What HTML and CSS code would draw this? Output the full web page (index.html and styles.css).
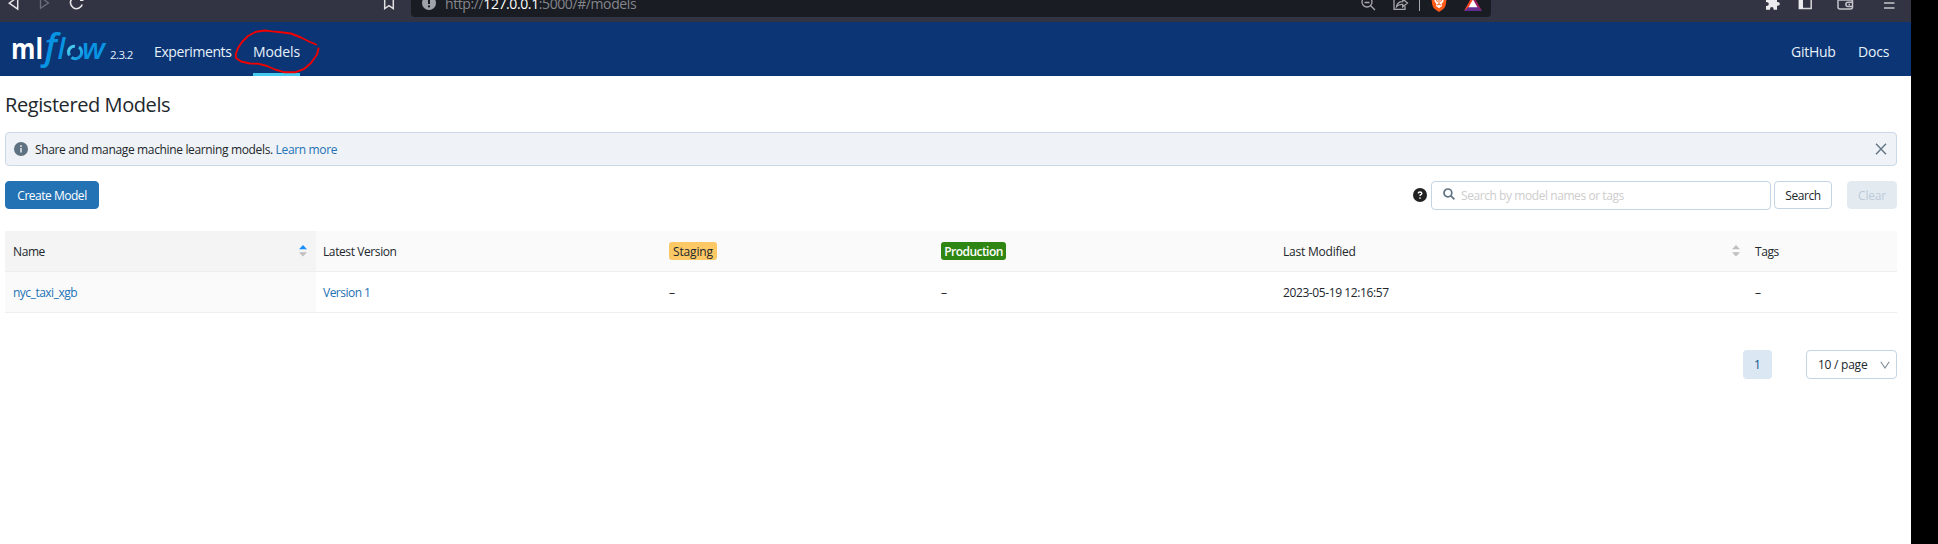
FILE: index.html
```html
<!DOCTYPE html>
<html lang="en">
<head>
<meta charset="utf-8">
<title>Registered Models</title>
<link rel="stylesheet" href="styles.css">
</head>
<body>
<div class="window">
  <div class="chrome">
    <svg class="back" width="12" height="22" viewBox="0 0 12 22" fill="none" stroke="#e6e6e8" stroke-width="1.5"><path d="M9.7 -3V9L1.2 3.2L9.7 -3"/></svg>
    <svg class="forward" width="12" height="22" viewBox="0 0 12 22" fill="none" stroke="#6c6e7b" stroke-width="1.3"><path d="M1.5 -3V8.3L9.5 3L1.5 -3"/></svg>
    <svg class="reload" width="15" height="22" viewBox="0 0 15 22" fill="none" stroke="#e6e6e8" stroke-width="1.6"><path d="M3.2 -1.5A6 6 0 1 0 13.2 4.5"/><path d="M11 -1H14.5V1H11Z" fill="#e6e6e8" stroke="none"/></svg>
    <svg class="bookmark" width="12" height="22" viewBox="0 0 12 22" fill="none" stroke="#dedee0" stroke-width="1.5"><path d="M1.7 -4V8.6L6 5.7L10.3 8.6V-4"/></svg>
    <div class="address">
      <svg class="warn" width="14" height="17" viewBox="0 0 14 17"><circle cx="7" cy="3" r="7" fill="#a0a2aa"/><path d="M7 -1V4" stroke="#191c22" stroke-width="2"/><circle cx="7" cy="6.4" r="1.1" fill="#191c22"/></svg>
      <span class="url">http://<b>127.0.0.1</b>:5000/#/models</span>
      <svg class="magnify" width="15" height="17" viewBox="0 0 15 17" fill="none" stroke="#a7a8ad" stroke-width="1.3"><circle cx="6" cy="2" r="5"/><path d="M3.5 2.5H8.5M9.7 5.7L14 10"/></svg>
      <svg class="share" width="16" height="17" viewBox="0 0 16 17" fill="none" stroke="#a7a8ad" stroke-width="1.3"><path d="M1 0V9.4H12V6.3M3.5 6.7C4 3 6.4 1.6 9.7 1.6V-1L14.5 3.1L9.7 7V4.4C7 4.2 5 4.8 3.5 6.7Z"/></svg>
      <span class="divider"></span>
      <svg class="brave" width="16" height="17" viewBox="0 0 16 17"><path d="M0 -4H16L14.7 5Q14 8.2 11 10L8 12L5 10Q2 8.2 1.3 5Z" fill="#fb5a18"/><path d="M3 -3H13L12.4 1.5L10.5 4L11 6L8 8.2L5 6L5.5 4L3.6 1.5Z" fill="#fff"/><path d="M5 .6L7 1.3M11 .6L9 1.3M8 0V4M6 5.2L8 4L10 5.2" fill="none" stroke="#fb5a18" stroke-width="1"/></svg>
      <svg class="bat" width="18" height="17" viewBox="0 0 18 17"><path d="M9 -5L0 11L9 7Z" fill="#ff4724"/><path d="M9 -5L18 11L9 7Z" fill="#9e1f63"/><path d="M0 11L4.5 7H13.5L18 11Z" fill="#662d91"/><path d="M9 -.5L4.6 7.2H13.4Z" fill="#fff"/></svg>
    </div>
    <svg class="puzzle" width="15" height="22" viewBox="0 0 15 22"><path d="M1 -2H12V2Q14.8 1.8 14.8 4Q14.8 6 12 5.8V9.7H8.6Q8.8 6.9 6.8 6.9Q4.8 6.9 5 9.7H1V6Q3.8 6.2 3.8 4Q3.8 2 1 2Z" fill="#ececee"/></svg>
    <svg class="panel" width="15" height="22" viewBox="0 0 15 22"><path d="M1.3 -3V8.6H13.2V-3" fill="none" stroke="#d6d7da" stroke-width="1.5"/><path d="M1 -3H5V9H1Z" fill="#ececee"/></svg>
    <svg class="wallet" width="17" height="22" viewBox="0 0 17 22" fill="none" stroke="#c4c5ca" stroke-width="1.5"><path d="M1 -2V7Q1 9 3 9H13.5Q15.5 9 15.5 7V1Q15.5 -.1 14 -.1H1M15.5 2.3H11Q8.9 2.3 8.9 4.4Q8.9 6.4 11 6.4H15.5M11.5 4.4H13"/></svg>
    <svg class="burger" width="11" height="22" viewBox="0 0 11 22" stroke="#c4c5ca" stroke-width="1.6"><path d="M0 3H10.5M0 8H10.5"/></svg>
  </div>

  <header class="header">
    <svg class="logo" width="96" height="54" viewBox="0 0 96 54">
      <defs><linearGradient id="ring" x1="0" y1="0" x2="1" y2="1"><stop offset="0" stop-color="#52d0ec"/><stop offset="1" stop-color="#0894e2"/></linearGradient></defs>
      <text class="logo-ml" x="-1" y="37" textLength="32" lengthAdjust="spacingAndGlyphs">ml</text>
      <text class="logo-fl" x="32.5" y="37"><tspan class="logo-f">f</tspan><tspan x="45.5">l</tspan></text>
      <path d="M57.5 33.5A6 6 0 0 1 63 24.2M67 25A6 6 0 0 1 59.5 35.5" fill="none" stroke="url(#ring)" stroke-width="3"/>
      <text class="logo-fl" x="70" y="37" textLength="23" lengthAdjust="spacingAndGlyphs">w</text>
    </svg>
    <span class="version">2.3.2</span>
    <nav class="nav">
      <a class="experiments">Experiments</a>
      <a class="models active">Models</a>
    </nav>
    <nav class="links"><a class="github">GitHub</a><a class="docs">Docs</a></nav>
  </header>

  <main class="main">
    <h1 class="title">Registered Models</h1>
    <div class="alert">
      <svg class="info" width="14" height="14" viewBox="0 0 14 14"><circle cx="7" cy="7" r="7" fill="#5f7281"/><path d="M7 3.2V4.9M7 6V10.4" stroke="#e8edf1" stroke-width="1.5"/></svg>
      <span class="alert-text">Share and manage machine learning models. <a class="link">Learn more</a></span>
      <svg class="close" width="12" height="12" viewBox="0 0 12 12" stroke="#5f7281" stroke-width="1.3"><path d="M1 .7L11 11.3M11 .7L1 11.3"/></svg>
    </div>
    <div class="toolbar">
      <button class="btn create">Create Model</button>
      <svg class="help" width="14" height="14" viewBox="0 0 14 14"><circle cx="7" cy="7" r="7" fill="#222"/><path d="M5.2 5.4Q5.3 4 7 4Q8.8 4 8.8 5.4Q8.8 6.2 7.8 6.7Q7 7.1 7 8" fill="none" stroke="#fff" stroke-width="1.4"/><circle cx="7" cy="10" r=".85" fill="#fff"/></svg>
      <div class="search-box">
        <svg width="12" height="12" viewBox="0 0 12 12" fill="none" stroke="#5f7281" stroke-width="1.7"><circle cx="4.9" cy="4.9" r="3.9"/><path d="M7.7 7.7L11.4 11.4"/></svg>
        <span class="placeholder">Search by model names or tags</span>
      </div>
      <button class="btn search">Search</button>
      <button class="btn clear">Clear</button>
    </div>
    <div class="table">
      <div class="row head">
        <div class="cell sorted"><span class="t-name">Name</span><svg class="sorter" width="8" height="12" viewBox="0 0 8 12"><path d="M4 0L8 4.3H0Z" fill="#1890ff"/><path d="M0 7.3H8L4 11.5Z" fill="#bfbfbf"/></svg></div>
        <div class="cell"><span class="t-latest">Latest Version</span></div>
        <div class="cell"><span class="badge staging">Staging</span></div>
        <div class="cell"><span class="badge production">Production</span></div>
        <div class="cell modified"><span class="t-modified">Last Modified</span><svg class="sorter" width="8" height="12" viewBox="0 0 8 12"><path d="M4 0L8 4.3H0ZM0 7.3H8L4 11.5Z" fill="#bfbfbf"/></svg></div>
        <div class="cell"><span class="t-tags">Tags</span></div>
      </div>
      <div class="row">
        <div class="cell sorted"><a class="link t-model">nyc_taxi_xgb</a></div>
        <div class="cell"><a class="link t-version">Version 1</a></div>
        <div class="cell"><span>–</span></div>
        <div class="cell"><span>–</span></div>
        <div class="cell"><span class="t-date">2023-05-19 12:16:57</span></div>
        <div class="cell"><span>–</span></div>
      </div>
    </div>
    <div class="pagination">
      <span class="page">1</span>
      <div class="select"><span class="t-size">10 / page</span><svg width="10" height="8" viewBox="0 0 10 8" fill="none" stroke="#7d8c98" stroke-width="1.1"><path d="M.8 .7L5 7L9.2 .7"/></svg></div>
    </div>
  </main>
  <svg class="scribble" width="88" height="48" viewBox="0 0 88 48" fill="none" stroke="#f00000" stroke-width="1.9" stroke-linecap="round" stroke-linejoin="round"><path d="M82 15.5L75 12.5L67 8.5L57 4.5L47 3.2L38 2.4L31 1.5L22 2.8L14 7L8 13L4 19L1.8 25L2 29L7 32.5L16 34.5L24 34.7L33 37L41 40.5L50 43.2L61 43.3L70 40L77 34L83 25.5L84.5 19.5"/></svg>
</div>
</body>
</html>
```
FILE: styles.css
```css
* { box-sizing: border-box; }
body {
  margin: 0;
  height: 544px;
  overflow: hidden;
  background: #000;
  color: #22272c;
  font: 12px/18px "Open Sans", "Noto Sans", sans-serif;
}
.window { position: relative; width: 1911px; height: 544px; background: #fff; }
svg { display: block; flex: none; }

/* Browser toolbar */
.chrome { display: flex; height: 22px; padding-left: 8px; overflow: hidden; background: #323443; }
.forward { margin-left: 19px; }
.reload { margin-left: 18px; }
.bookmark { margin-left: 299px; }
.address {
  display: flex;
  width: 1080px;
  height: 17px;
  margin-left: 16px;
  padding-left: 11px;
  border-radius: 0 0 4px 4px;
  background: #191c22;
}
.url { width: 194px; margin: -5px 0 0 9px; color: #85868c; font-size: 14px; letter-spacing: -.4px; white-space: nowrap; }
.url b { color: #fff; font-weight: 400; }
.magnify { margin-left: 722px; }
.share { margin-left: 17px; }
.divider { width: 1px; height: 11px; margin-left: 10px; background: #a7a8ad; }
.brave { margin-left: 11px; }
.bat { margin-left: 17px; }
.puzzle { margin-left: 274px; }
.panel { margin-left: 18px; }
.wallet { margin-left: 24px; }
.burger { margin-left: 30px; }

/* Application header */
.header { display: flex; height: 54px; padding-left: 12px; background: #0b3574; color: #e7f1fb; }
.logo text { font-family: "Open Sans", sans-serif; }
.logo .logo-ml { fill: #fff; font-size: 28px; font-weight: 700; }
.logo .logo-fl { fill: #0894e2; font-size: 28px; font-style: italic; font-weight: 600; }
.logo .logo-f { font-size: 36px; font-weight: 600; }
.version { margin: 24px 0 0 2px; width: 44px; font-size: 11.5px; letter-spacing: -.6px; }
.nav { display: flex; gap: 22px; font-size: 14px; line-height: 60px; }
.nav a { height: 54px; }
.experiments { width: 77px; letter-spacing: -.4px; }
.models { width: 47px; letter-spacing: -.1px; }
.active { border-bottom: 3px solid #43c9ed; }
.links { display: flex; margin-left: auto; padding-right: 21px; font-size: 14px; line-height: 60px; }
.github { width: 67px; letter-spacing: -.25px; }
.docs { width: 32px; letter-spacing: -.2px; }
.scribble { position: absolute; left: 234px; top: 29px; }

/* Page content */
.main { padding: 14px 14px 0 5px; }
.title { margin: 0 0 12px; font-size: 20px; line-height: 30px; font-weight: 500; letter-spacing: -.42px; }
.alert {
  display: flex;
  align-items: center;
  height: 34px;
  padding: 0 9px 0 8px;
  border: 1px solid #cbd9e6;
  border-radius: 4px;
  background: #eff3f7;
}
.alert-text { margin-left: 7px; padding-top: 2px; letter-spacing: -.35px; }
.close { margin-left: auto; }
.link { color: #2272b4; }
.toolbar { display: flex; align-items: flex-start; margin-top: 15px; }
.btn {
  height: 28px;
  padding: 2px 0 0;
  border: 1px solid #c5d5e3;
  border-radius: 4px;
  background: #fff;
  color: #22272c;
  font: inherit;
  white-space: nowrap;
}
.create { width: 94px; border-color: #2272b4; background: #2272b4; color: #fff; letter-spacing: -.48px; }
.help { margin: 7px 4px 0 auto; }
.search-box { display: flex; align-items: center; width: 340px; height: 29px; padding-left: 11px; border: 1px solid #c5d5e3; border-radius: 4px; }
.search-box svg { margin-top: -3px; }
.placeholder { margin-left: 6px; padding-top: 1px; color: #cdcdcd; letter-spacing: -.43px; }
.search { width: 58px; margin-left: 3px; letter-spacing: -.45px; }
.clear { width: 50px; margin-left: 15px; border-color: #e3eaf0; background: #e3eaf0; color: #bccbd9; letter-spacing: -.2px; }
.table { margin-top: 21px; }
.row { display: grid; grid-template-columns: 311px 346px 272px 342px 472px 149px; height: 41px; }
.cell { display: flex; align-items: center; justify-content: space-between; padding: 0 7px; border-bottom: 1px solid #eeeeee; }
.cell > span:not(.badge), .cell > a { padding-top: 2px; }
.head { background: #fafafa; }
.sorted { padding-right: 9px; padding-left: 8px; background: #fafafa; }
.modified { padding-right: 8px; }
.head .sorted { background: #f4f4f4; }
.t-name { letter-spacing: -.4px; }
.t-latest { letter-spacing: -.4px; }
.t-modified { letter-spacing: -.22px; }
.t-tags { letter-spacing: -.4px; }
.t-model { letter-spacing: -.5px; }
.t-version { letter-spacing: -.52px; }
.t-date { letter-spacing: -.4px; }
.badge { height: 18px; border-radius: 3px; text-align: center; line-height: 20px; }
.staging { width: 48px; background: #fcc966; letter-spacing: -.15px; }
.production { width: 65px; background: #308613; color: #fff; font-weight: 600; letter-spacing: -.55px; }
.pagination { display: flex; justify-content: flex-end; margin-top: 37px; }
.page { width: 29px; height: 29px; border-radius: 4px; background: #dbe7f2; color: #0e538b; text-align: center; line-height: 30px; }
.select { display: flex; align-items: center; justify-content: space-between; width: 91px; height: 29px; margin-left: 34px; padding: 0 6px 0 11px; border: 1px solid #c5d5e3; border-radius: 4px; }
.t-size { padding-top: 1px; letter-spacing: -.25px; }
```
